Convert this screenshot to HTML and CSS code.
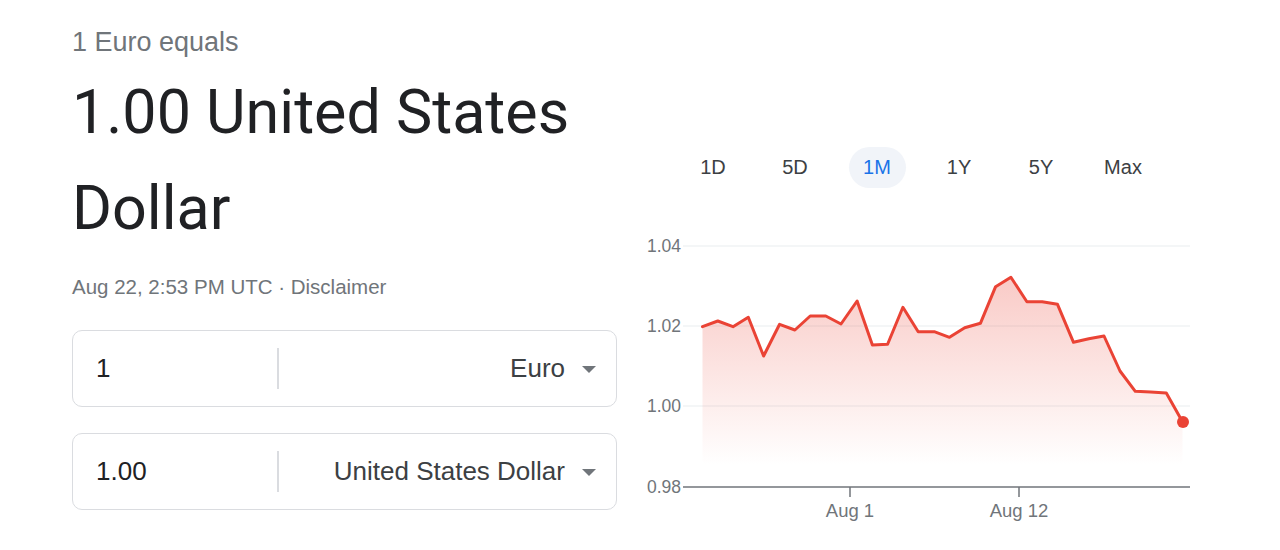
FILE: index.html
```html
<!DOCTYPE html>
<html lang="en">
<head>
<meta charset="utf-8">
<title>Euro to US Dollar</title>
<link rel="stylesheet" href="styles.css">
</head>
<body>
<div class="page">
  <div class="left">
    <div class="equals">1 Euro equals</div>
    <div class="result">1.00 United States Dollar</div>
    <div class="stamp">Aug 22, 2:53 PM UTC · Disclaimer</div>
    <div class="field">
      <div class="amount">1</div>
      <div class="divider"></div>
      <div class="currency">Euro<span class="caret"></span></div>
    </div>
    <div class="field">
      <div class="amount">1.00</div>
      <div class="divider"></div>
      <div class="currency">United States Dollar<span class="caret"></span></div>
    </div>
  </div>
  <div class="right">
    <div class="tabs">
      <div class="tab">1D</div>
      <div class="tab">5D</div>
      <div class="tab active">1M</div>
      <div class="tab">1Y</div>
      <div class="tab">5Y</div>
      <div class="tab">Max</div>
    </div>
    <svg class="chart" width="560" height="300" viewBox="640 230 560 300" xmlns="http://www.w3.org/2000/svg">
      <defs>
        <linearGradient id="fill" x1="0" y1="277" x2="0" y2="465" gradientUnits="userSpaceOnUse">
          <stop offset="0" stop-color="#ea4335" stop-opacity="0.28"/>
          <stop offset="1" stop-color="#ea4335" stop-opacity="0"/>
        </linearGradient>
      </defs>
      <g class="grid">
        <line x1="683" y1="246" x2="1190" y2="246"/>
        <line x1="683" y1="326" x2="1190" y2="326"/>
        <line x1="683" y1="406" x2="1190" y2="406"/>
      </g>
      <g class="ylabels">
        <text x="681" y="252">1.04</text>
        <text x="681" y="332">1.02</text>
        <text x="681" y="412">1.00</text>
        <text x="681" y="493">0.98</text>
      </g>
      <polygon class="area" points="702.5,326.7 717.8,321 733,326.7 748.3,317.3 763.6,356 779.6,324.3 794.9,330 810.2,316 825.8,316 841,324 857.1,301 872.4,345 887.6,344.3 902.9,307.3 918.2,331.7 934.2,331.7 949.5,337.3 964.7,327.7 980.4,323.3 995.6,286.7 1010.9,277.3 1026.9,301.7 1042.2,301.7 1057.5,304.3 1073.5,342.3 1088.8,338.7 1104,336 1120,371 1135.3,391.3 1150.6,392 1166.3,393 1182.5,421.7 1182.5,487 702.5,487"/>
      <polyline class="line" points="702.5,326.7 717.8,321 733,326.7 748.3,317.3 763.6,356 779.6,324.3 794.9,330 810.2,316 825.8,316 841,324 857.1,301 872.4,345 887.6,344.3 902.9,307.3 918.2,331.7 934.2,331.7 949.5,337.3 964.7,327.7 980.4,323.3 995.6,286.7 1010.9,277.3 1026.9,301.7 1042.2,301.7 1057.5,304.3 1073.5,342.3 1088.8,338.7 1104,336 1120,371 1135.3,391.3 1150.6,392 1166.3,393 1182.5,421.7"/>
      <circle class="dot" cx="1183" cy="422" r="6"/>
      <g class="axis">
        <line x1="683" y1="487" x2="1190" y2="487"/>
        <line x1="850" y1="487" x2="850" y2="497"/>
        <line x1="1019" y1="487" x2="1019" y2="497"/>
      </g>
      <g class="xlabels">
        <text x="850" y="517">Aug 1</text>
        <text x="1019" y="517">Aug 12</text>
      </g>
    </svg>
  </div>
</div>
</body>
</html>
```

FILE: styles.css
```css
html, body {
  margin: 0;
  padding: 0;
  background: #ffffff;
}

body {
  font-family: "Liberation Sans", Arial, sans-serif;
  color: #202124;
}

.page {
  display: flex;
  gap: 23px;
  padding-left: 72px;
}

.left {
  width: 545px;
  padding-top: 26px;
}

.equals {
  font-size: 27px;
  line-height: 32px;
  color: #70757a;
}

.result {
  margin-top: 6px;
  font-family: Roboto, "Liberation Sans", sans-serif;
  font-size: 61px;
  line-height: 96px;
  color: #202124;
  width: 520px;
}

.stamp {
  margin-top: 19px;
  font-size: 20.5px;
  line-height: 24px;
  color: #70757a;
}

.field {
  box-sizing: border-box;
  height: 77px;
  margin-top: 31px;
  border: 1.5px solid #dadce0;
  border-radius: 10px;
  display: flex;
  align-items: center;
}

.field + .field {
  margin-top: 26px;
}

.amount {
  width: 181px;
  padding-left: 23px;
  font-size: 26px;
  color: #202124;
}

.divider {
  width: 1.5px;
  height: 41px;
  background: #dadce0;
}

.currency {
  flex: 1;
  display: flex;
  justify-content: flex-end;
  align-items: center;
  padding-right: 20px;
  font-size: 26px;
  color: #3c4043;
}

.caret {
  width: 0;
  height: 0;
  margin-left: 17px;
  border-left: 7.5px solid transparent;
  border-right: 7.5px solid transparent;
  border-top: 7.5px solid #70757a;
  position: relative;
  top: 1px;
}

.right {
  width: 560px;
  padding-top: 147px;
}

.tabs {
  display: flex;
  gap: 25px;
  margin-left: 44.5px;
}

.tab {
  width: 57px;
  height: 41px;
  border-radius: 20.5px;
  display: flex;
  align-items: center;
  justify-content: center;
  font-size: 20px;
  color: #3c4043;
}

.tab.active {
  background: #f1f4f9;
  color: #1a73e8;
}

.chart {
  display: block;
  margin-top: 42px;
}

.grid line {
  stroke: #f1f3f4;
  stroke-width: 1.5;
}

.axis line {
  stroke: #70757a;
  stroke-width: 1.5;
}

.ylabels text {
  font-family: "Liberation Sans", Arial, sans-serif;
  font-size: 17.5px;
  fill: #70757a;
  text-anchor: end;
}

.xlabels text {
  font-family: "Liberation Sans", Arial, sans-serif;
  font-size: 18.5px;
  fill: #70757a;
  text-anchor: middle;
}

.area {
  fill: url(#fill);
  stroke: none;
}

.line {
  fill: none;
  stroke: #ea4335;
  stroke-width: 3;
  stroke-linejoin: round;
  stroke-linecap: round;
}

.dot {
  fill: #ea4335;
}
```
